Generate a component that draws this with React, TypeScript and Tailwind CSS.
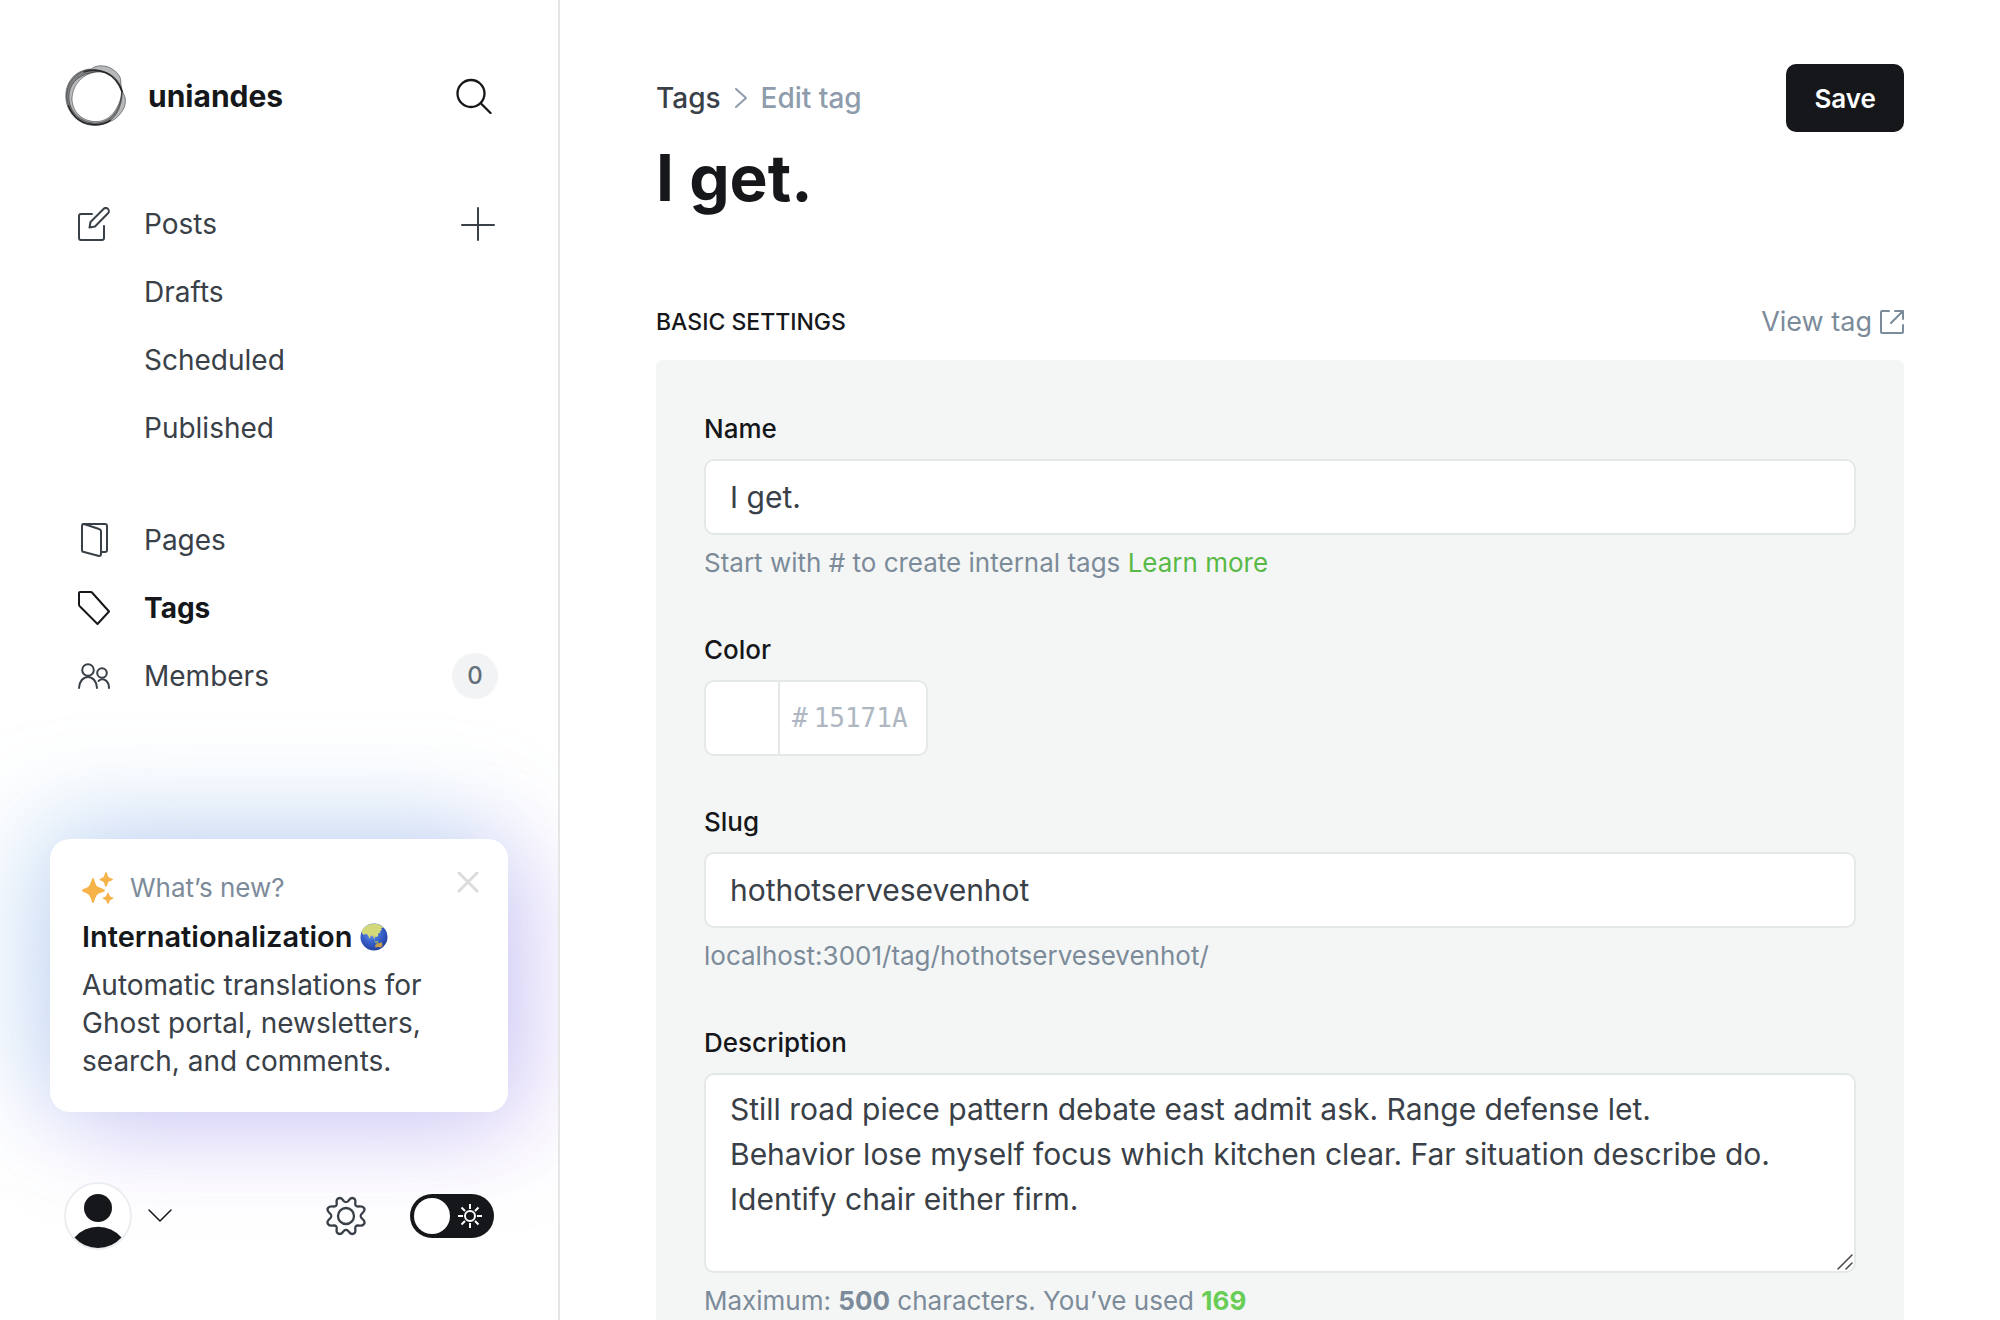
import React from "react";

const ink = "text-[#15171a]";
const navText = "text-[#394047]";

function Logo() {
  return (
    <svg viewBox="0 0 80 80" className="size-[62px] shrink-0" fill="none" stroke="#15171a" aria-hidden="true">
      <path
        fillRule="evenodd"
        fill="#15171a"
        fillOpacity=".3"
        strokeWidth="1"
        strokeOpacity=".6"
        d="M34 5C38 2 42 1 46 1c5 0 9 1 13 3 8 5 13 10 13 17 0 5 1 9 2 13 2 4 4 7 4 12 0 6-2 11-6 16-4 6-9 9-14 11-6 3-13 5-20 5C18 78 1 61 1 40 1 20 15 6 34 5ZM40 9C24 11 10 24 9 43c0 17 13 30 31 30 12 0 21-7 27-18 4-7 6-14 6-21C71 18 57 7 40 9Z"
      />
      <path
        fillRule="evenodd"
        fill="#15171a"
        fillOpacity=".35"
        strokeWidth="1"
        strokeOpacity=".6"
        d="M30 6C14 9 2 22 2 41c1 20 17 36 37 36 22 0 34-16 35-43C70 18 54 4 30 6ZM33 10C50 5 68 14 73 34 73 58 58 75 39 75 20 74 5 60 5 41 5 26 15 14 33 10Z"
      />
      <path strokeWidth="2" strokeOpacity=".8" d="M4 52c6 15 18 25 35 25 8 0 15-2 20-6M24 9c20-6 40 0 50 26" />
    </svg>
  );
}

function Globe() {
  return (
    <svg viewBox="0 0 28 28" className="size-7" aria-hidden="true">
      <defs>
        <radialGradient id="sea" cx="42%" cy="35%" r="65%">
          <stop offset="0" stopColor="#6f9be6" />
          <stop offset=".5" stopColor="#3c66d0" />
          <stop offset="1" stopColor="#2340a0" />
        </radialGradient>
      </defs>
      <circle cx="14" cy="14" r="13.5" fill="url(#sea)" />
      <path
        fill="#d3d878"
        d="M1.500 8.500C4 3.500 8.500.8 14 .7c4 0 7 1.300 9.500 4L21 5l1 2-2 1 .5 2-2 0-.5 3-1.500 1-2-.5.5 2.500-1-.5-1.500-3-2 .5-.5 3-1.500-2.500-1-2-2-.5-2 1-1.500-2Z"
      />
      <path fill="#9db75a" d="M14 17l2 1.500 2-.5.5 1.500-3 .5Z" />
      <path fill="#c9a04a" d="M15 22.500l2.500-2.500 2 .3 2-1.300 1 3-1.500 2.500-2.500-.5-3 .5Z" />
    </svg>
  );
}

const stroke = {
  fill: "none",
  stroke: "currentColor",
  strokeLinecap: "round",
  strokeLinejoin: "round",
  strokeWidth: 2,
  "aria-hidden": true,
} as const;

function PostsIcon() {
  return (
    <svg viewBox="0 0 32 34" className="h-[34px] w-8" {...stroke}>
      <path d="M14 7H3a2 2 0 0 0-2 2v22a2 2 0 0 0 2 2h21a2 2 0 0 0 2-2V19" />
      <path d="M11.500 20.500l1-5.500L25.500 2a3 3 0 0 1 4.500 4.300L17 19.500Z" />
    </svg>
  );
}
function PagesIcon() {
  return (
    <svg viewBox="0 0 32 34" className="h-[34px] w-8" {...stroke}>
      <path d="M5 1h22a2 2 0 0 1 2 2v24a2 2 0 0 1-2 2h-4" />
      <path d="M6 1l15 5a2.500 2.500 0 0 1 2 2v23a2 2 0 0 1-2 2L6 29a2 2 0 0 1-2-2V3a2 2 0 0 1 2-2Z" />
    </svg>
  );
}
function TagIcon() {
  return (
    <svg viewBox="0 0 32 34" className="h-[34px] w-8" {...stroke}>
      <path d="M2 1h11a2 2 0 0 1 1 .5L31 20.500 19.500 33 2 15.500a2 2 0 0 1-1-1.500V2a1 1 0 0 1 1-1Z" />
    </svg>
  );
}
function MembersIcon() {
  return (
    <svg viewBox="0 0 32 26" className="h-[26px] w-8" {...stroke}>
      <circle cx="10" cy="7" r="5.800" />
      <path d="M1 25c0-6 4-11 9-11s9 5 9 11" />
      <circle cx="24" cy="10" r="4.800" />
      <path d="M20.500 18c5-4 10.500 0 10.500 7" />
    </svg>
  );
}

function NavRow({ icon, children, active = false, end }: { icon?: React.ReactNode; children: React.ReactNode; active?: boolean; end?: React.ReactNode }) {
  return (
    <li className="flex h-[68px] items-center justify-between">
      <a href="#" className={`flex items-center ${active ? "font-bold text-[#15171a]" : navText}`}>
        <span className="flex w-[66px] items-center">{icon}</span>
        {children}
      </a>
      {end}
    </li>
  );
}

function Sidebar() {
  return (
    <aside className="flex min-h-screen w-[560px] shrink-0 flex-col border-r-2 border-[#e6e6e6] pt-[65px]">
      <header className="flex items-center justify-between pl-[65px] pr-[66px]">
        <div className="flex items-center gap-[21px]">
          <Logo />
          <span className={`text-[30px] leading-10 font-bold ${ink}`}>uniandes</span>
        </div>
        <button type="button" aria-label="Search" className={ink}>
          <svg viewBox="0 0 36 36" className="size-9" {...stroke} strokeWidth={2.3}>
            <circle cx="15" cy="15.500" r="13.500" />
            <path d="M25 25.500l9.500 9.500" />
          </svg>
        </button>
      </header>
      <nav className="mt-[63px] pl-[78px] pr-15 text-[28px]">
        <ul>
          <NavRow
            icon={<PostsIcon />}
            end={
              <button type="button" aria-label="New post" className={`mr-[3px] ${navText}`}>
                <svg viewBox="0 0 34 34" className="size-[34px]" {...stroke}>
                  <path d="M17 1v32M1 18h32" />
                </svg>
              </button>
            }
          >
            Posts
          </NavRow>
          <NavRow>Drafts</NavRow>
          <NavRow>Scheduled</NavRow>
          <NavRow>Published</NavRow>
        </ul>
        <ul className="mt-11">
          <NavRow icon={<PagesIcon />}>Pages</NavRow>
          <NavRow icon={<TagIcon />} active>Tags</NavRow>
          <NavRow
            icon={<MembersIcon />}
            end={<span className="flex size-[46px] items-center justify-center rounded-full bg-[#f1f3f4] text-2xl font-medium text-[#626d79]">0</span>}
          >
            Members
          </NavRow>
        </ul>
      </nav>
      <div className="mt-auto overflow-hidden px-[50px] pt-[128px] pb-[70px]">
        <section className="rounded-[20px] bg-white px-8 pt-7 pb-8 shadow-[-20px_-16px_100px_rgba(120,195,230,0.36),20px_16px_100px_rgba(165,110,235,0.36)]">
          <div className="flex items-start justify-between">
            <div className="flex items-center gap-4">
              <svg viewBox="0 0 32 32" className="size-8 text-[#f5b34a]" fill="currentColor" aria-hidden="true">
                <path d="M11 6c1.500 0 2 7 4.500 8.500S23 17 23 18.500s-5 2-7.500 4S12.500 31 11 31s-2-6.500-4.500-8.500S0 20 0 18.500s4-2 6.500-4S9.500 6 11 6ZM24 0c1 0 1.500 4 2.500 5S31 6.500 31 7.500s-3.500 1.500-4.500 2.500S25 15 24 15s-1.500-4-2.500-5S17.500 8.500 17.500 7.500s3-1.500 4-2.500S23 0 24 0ZM26 20.500c1 0 1.200 3 2 3.700s3.500 1 3.500 2-2.700 1.200-3.500 2-1 3.800-2 3.800-1.200-3-2-3.800-3.500-1-3.500-2 2.700-1.200 3.500-2 1-3.700 2-3.700Z" />
              </svg>
              <span className="text-[26px] leading-[42px] text-[#7c8b9a]">What’s new?</span>
            </div>
            <button type="button" aria-label="Dismiss" className="mt-1 mr-[-3px] text-[#dcdcdc]">
              <svg viewBox="0 0 22 22" className="size-[22px]" {...stroke} strokeWidth={3}>
                <path d="M2 2l18 18M20 2L2 20" />
              </svg>
            </button>
          </div>
          <h2 className={`mt-2 flex items-center gap-2 text-[29px] leading-[40px] font-semibold ${ink}`}>
            Internationalization <Globe />
          </h2>
          <p className="mt-[9px] text-[28px] leading-[38px] text-[#394047]">
            Automatic translations for Ghost portal, newsletters, search, and comments.
          </p>
        </section>
        <footer className="mt-[70px] flex items-center pr-3.5 pl-3.5">
          <button type="button" aria-label="Account" className={`flex items-center gap-4 ${ink}`}>
            <svg viewBox="0 0 68 68" className="size-[68px]" aria-hidden="true">
              <circle cx="34" cy="34" r="33" fill="#fff" stroke="#ebeef0" strokeWidth="2" />
              <circle cx="34" cy="26" r="14" fill="currentColor" />
              <path fill="currentColor" d="M10.500 55.500a31 31 0 0 1 47 0A32 32 0 0 1 34 66a32 32 0 0 1-23.500-10.500Z" />
            </svg>
            <svg viewBox="0 0 24 14" className="h-3.5 w-6" {...stroke} strokeWidth={1.5}>
              <path d="M1 1l11 11L23 1" />
            </svg>
          </button>
          <button type="button" aria-label="Settings" className="ml-auto text-[#394047]">
            <Gear />
          </button>
          <label className="relative ml-11 flex h-11 w-[84px] cursor-pointer items-center justify-between rounded-full bg-[#15171a] pr-3 pl-1 text-white">
            <input type="checkbox" aria-label="Night shift" className="sr-only" />
            <span className="size-9 rounded-full bg-white" />
            <svg viewBox="0 0 24 24" className="size-6" {...stroke} strokeLinecap="butt">
              <circle cx="12" cy="12" r="5" />
              <path d="M12 0v5M12 19v5M0 12h5M19 12h5M3.500 3.500l3.500 3.500M17 17l3.500 3.500M20.500 3.500L17 7M7 17l-3.500 3.500" />
            </svg>
          </label>
        </footer>
      </div>
    </aside>
  );
}

function Gear() {
  return (
    <svg viewBox="0 0 40 40" className="size-10" {...stroke} strokeWidth={2.3}>
      <circle cx="20" cy="20" r="8" />
      <path d="M11 3.500c1.500-2 4-2 5.500 0l1.500 1.800c1 1 3 1 4 0l1.500-1.800c1.500-2 4-2 5.500 0 .5 1 .5 2 .3 3.500-.3 2.500.7 3.700 3.200 3.500 2.500-.3 4.500 0 5.500 1.500s.5 3-1 4.500l-1.500 1.500c-1 1-1 3 0 4l1.500 1.500c1.500 1.500 2 3 1 4.500s-3 2-5.500 1.500c-2.500-.2-3.500 1-3.200 3.500.2 1.500.2 2.500-.3 3.500-1.500 2-4 2-5.500 0L22 34.700c-1-1-3-1-4 0l-1.500 1.800c-1.500 2-4 2-5.500 0-.5-1-.5-2-.3-3.500.3-2.500-.7-3.700-3.200-3.500-2.500.5-4.500 0-5.500-1.500s-.5-3 1-4.500l1.500-1.500c1-1 1-3 0-4L3 16.500c-1.500-1.500-2-3-1-4.500s3-1.800 5.500-1.500c2.500.2 3.500-1 3.200-3.500-.2-1.500-.2-2.500.3-3.500Z" />
    </svg>
  );
}

const labelClass = "block text-[26px] leading-9 font-medium text-[#15171a]";
const boxClass = "mt-3 block w-full rounded-[10px] border-2 border-[#e5e8e8] bg-white px-6 text-[30px] text-[#394047] outline-none";
const hintClass = "mt-[7px] text-[26px] leading-[42px] text-[#7c8b9a]";

export default function App() {
  return (
    <div className="flex h-screen overflow-hidden bg-white font-['Inter',sans-serif]">
      <Sidebar />
      <main className="min-w-0 flex-1 px-24 pt-16">
        <header className="flex items-start justify-between">
          <div>
            <nav aria-label="Breadcrumb" className="flex h-[68px] items-center gap-3.5 text-[28px]">
              <a href="#" className="font-medium text-[#394047]">Tags</a>
              <svg viewBox="0 0 12 20" className="h-5 w-3 text-[#8e9cac]" {...stroke}>
                <path d="M1 1l10 9-10 9" />
              </svg>
              <span className="font-medium text-[#8e9cac]">Edit tag</span>
            </nav>
            <h1 className={`mt-1.5 text-[64px] leading-[80px] font-bold ${ink}`}>I get.</h1>
          </div>
          <button type="button" className="h-[68px] rounded-[10px] bg-[#15171a] px-7 text-[26px] font-semibold text-white">Save</button>
        </header>
        <section>
          <div className="mt-21 flex items-center justify-between pb-[18px]">
            <h2 className={`text-[23px] leading-10 font-medium ${ink}`}>BASIC SETTINGS</h2>
            <a href="#" className="flex items-center gap-2 text-[27px] leading-10 text-[#7c8b9a]">
              View tag
              <svg viewBox="0 0 24 24" className="size-6" {...stroke}>
                <path d="M9 1H2a1 1 0 0 0-1 1v20a1 1 0 0 0 1 1h20a1 1 0 0 0 1-1v-7M15 1h8v8M23 1L11 13" />
              </svg>
            </a>
          </div>
          <form className="rounded-md bg-[#f4f6f5] px-12 pt-[51px] pb-12">
            <div className="mb-12">
              <label htmlFor="name" className={labelClass}>Name</label>
              <input id="name" defaultValue="I get." className={`${boxClass} h-[76px]`} />
              <p className={hintClass}>
                Start with # to create internal tags <a href="#" className="text-[#59b947]">Learn more</a>
              </p>
            </div>
            <div className="mb-12">
              <label htmlFor="color" className={labelClass}>Color</label>
              <div className="mt-3 flex h-[76px] w-56 overflow-hidden rounded-[10px] border-2 border-[#e5e8e8] bg-white font-['DejaVu_Sans_Mono',monospace] text-[26px] text-[#aeb7c1]">
                <button type="button" aria-label="Pick color" className="w-[74px] shrink-0 border-r-2 border-[#e5e8e8]" />
                <span className="flex items-center pl-3">#</span>
                <input id="color" placeholder="15171A" className="w-full min-w-0 flex-1 pl-1.5 outline-none placeholder:text-[#aeb7c1]" />
              </div>
            </div>
            <div className="mb-12">
              <label htmlFor="slug" className={labelClass}>Slug</label>
              <input id="slug" defaultValue="hothotservesevenhot" className={`${boxClass} h-[76px]`} />
              <p className={hintClass}>localhost:3001/tag/hothotservesevenhot/</p>
            </div>
            <div>
              <label htmlFor="description" className={labelClass}>Description</label>
              <div className="relative">
                <textarea
                  id="description"
                  className={`${boxClass} h-[200px] resize-none py-3 leading-[45px]`}
                  defaultValue="Still road piece pattern debate east admit ask. Range defense let.
Behavior lose myself focus which kitchen clear. Far situation describe do. Identify chair either firm."
                />
                <svg viewBox="0 0 16 16" className="absolute right-[3px] bottom-[3px] size-4 text-[#444]" {...stroke} strokeWidth={1.5}>
                  <path d="M1 15L15 1M9 15l6-6" />
                </svg>
              </div>
              <p className={hintClass}>
                Maximum: <b className="font-bold">500</b> characters. You’ve used <b className="font-bold text-[#68cd55]">169</b>
              </p>
            </div>
          </form>
        </section>
      </main>
    </div>
  );
}
